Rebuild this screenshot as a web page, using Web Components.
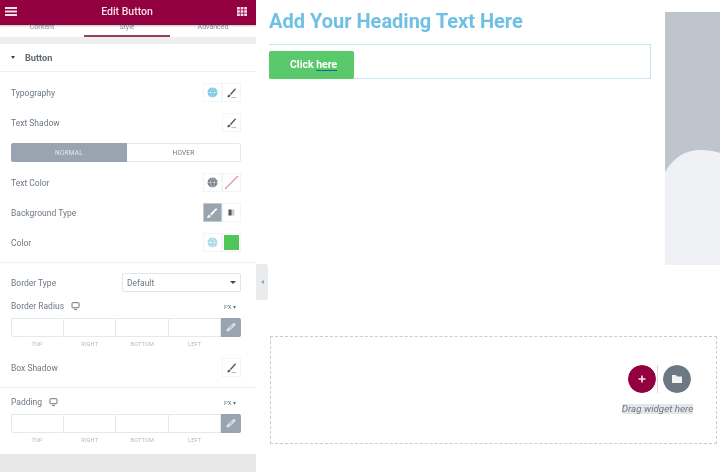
<!DOCTYPE html>
<html>
<head>
<meta charset="utf-8">
<title>Edit Button</title>
<style>
  html, body { margin: 0; padding: 0; background: #fff; overflow: hidden; }
  body { width: 720px; height: 472px; font-family: Roboto, "Liberation Sans", sans-serif; filter: blur(.6px); }
  ed-app { width: 720px; height: 472px; }
</style>
</head>
<body>
<ed-app>
  <ed-panel slot="panel">
    <ed-row label="Typography"><ed-icon-btn kind="globe" tint="#7cc4e4"></ed-icon-btn><ed-icon-btn kind="pen"></ed-icon-btn></ed-row>
    <ed-row label="Text Shadow"><ed-icon-btn kind="pen"></ed-icon-btn></ed-row>
    <ed-switch></ed-switch>
    <ed-row label="Text Color"><ed-icon-btn kind="globe" tint="#7a838b"></ed-icon-btn><ed-icon-btn kind="slash"></ed-icon-btn></ed-row>
    <ed-row label="Background Type"><ed-icon-btn kind="brush" active></ed-icon-btn><ed-icon-btn kind="gradient"></ed-icon-btn></ed-row>
    <ed-row label="Color"><ed-icon-btn kind="globe" tint="#a9d8ec"></ed-icon-btn><ed-icon-btn kind="swatch"></ed-icon-btn></ed-row>
    <ed-divider></ed-divider>
    <ed-select label="Border Type" value="Default"></ed-select>
    <ed-dimensions label="Border Radius"></ed-dimensions>
    <ed-row label="Box Shadow" class="after-dim"><ed-icon-btn kind="pen"></ed-icon-btn></ed-row>
    <ed-divider></ed-divider>
    <ed-dimensions label="Padding"></ed-dimensions>
  </ed-panel>
  <ed-canvas slot="canvas"></ed-canvas>
</ed-app>

<script>
// @ts-check
(function() {
  const ICONS = {
    pen: `<path d="M4.500 12c1.300.3 2.300-.2 2.700-1.400l-1.200-1c-1 .3-1.400 1.300-1.500 2.400z" fill="#555"/><path d="M6.700 9.300l4.300-4.800.8.7-4.200 5z" fill="#555"/><path d="M8 12.300h4" stroke="#aaa" stroke-width=".7"/>`,
    globe: `<circle cx="8" cy="8" r="4.200" fill="currentColor"/><path d="M3.800 8h8.400M8 3.800c-2.200 2.400-2.200 6 0 8.400M8 3.800c2.200 2.400 2.200 6 0 8.400" stroke="#fff" stroke-width=".5" fill="none" opacity=".7"/>`,
    brush: `<path d="M3.500 12.500c1.600.2 2.600-.4 3-1.600l-1.200-1.100c-1.200.3-1.600 1.400-1.800 2.700z" fill="#fff"/><path d="M6 9.300l5-5 1 1-4.900 5.200z" fill="#fff"/>`,
    gradient: `<rect x="5.500" y="5.500" width="5" height="5" fill="#c9ccd0"/><rect x="5.500" y="5.500" width="2.500" height="5" fill="#55595e"/>`
  };

  const iconBtn = document.createElement("template");
  iconBtn.innerHTML = `
    <style>
      :host { display: block; width: 19px; height: 19px; box-sizing: border-box; background: #fff;
              box-shadow: 0 0 0 .5px #e9ebed inset; }
      :host([active]) { background: #98a5b0; }
      svg { display: block; width: 19px; height: 19px; }
      .swatch { width: 15px; height: 15px; margin: 2px; background: #4fc65a; }
    </style>
    <div id="body"></div>`;

  class EdIconBtn extends HTMLElement {
    constructor() {
      super();
      this._root = this.attachShadow({ mode: "open" });
      this._root.appendChild(iconBtn.content.cloneNode(true));
    }
    connectedCallback() {
      const kind = this.getAttribute("kind");
      const body = this._root.querySelector("#body");
      if (kind === "swatch") {
        body.innerHTML = `<div class="swatch"></div>`;
      } else if (kind === "slash") {
        body.innerHTML = `<svg viewBox="0 0 19 19"><path d="M3 16L16 3" stroke="#e58aa0" stroke-width="1.100"/></svg>`;
      } else {
        body.style.color = this.getAttribute("tint") || "#888";
        body.innerHTML = `<svg viewBox="0 0 16 16">${ICONS[kind]}</svg>`;
      }
    }
  }
  customElements.define("ed-icon-btn", EdIconBtn);

  const row = document.createElement("template");
  row.innerHTML = `
    <style>
      :host { display: flex; align-items: center; justify-content: space-between; height: 19px;
              margin: 11px 15px 0 11px; font-size: 8.5px; color: #6d7882; }
      :host(.after-dim) { margin-top: 9px; }
      .btns { display: flex; }
    </style>
    <span id="label"></span><div class="btns"><slot></slot></div>`;

  class EdRow extends HTMLElement {
    constructor() {
      super();
      this._root = this.attachShadow({ mode: "open" });
      this._root.appendChild(row.content.cloneNode(true));
    }
    connectedCallback() {
      this._root.querySelector("#label").textContent = this.getAttribute("label");
    }
  }
  customElements.define("ed-row", EdRow);

  const sw = document.createElement("template");
  sw.innerHTML = `
    <style>
      :host { display: grid; grid-template-columns: 116px 114px; height: 19px; margin: 11px 15px 0 11px;
              font-size: 6.5px; letter-spacing: .2px; box-sizing: border-box; }
      div { display: flex; align-items: center; justify-content: center; }
      .on { background: #98a5b0; color: #e4e8ec; border-radius: 2px 0 0 2px; }
      .off { color: #6d7882; border: 1px solid #e6e8ea; border-left: 0; border-radius: 0 2px 2px 0; }
    </style>
    <div class="on">NORMAL</div><div class="off">HOVER</div>`;

  class EdSwitch extends HTMLElement {
    constructor() {
      super();
      this.attachShadow({ mode: "open" }).appendChild(sw.content.cloneNode(true));
    }
  }
  customElements.define("ed-switch", EdSwitch);

  const divider = document.createElement("template");
  divider.innerHTML = `<style>:host { display: block; height: 1px; margin-top: 10px; background: #f0f1f2; }</style>`;
  class EdDivider extends HTMLElement {
    constructor() {
      super();
      this.attachShadow({ mode: "open" }).appendChild(divider.content.cloneNode(true));
    }
  }
  customElements.define("ed-divider", EdDivider);

  const select = document.createElement("template");
  select.innerHTML = `
    <style>
      :host { display: flex; align-items: center; justify-content: space-between; height: 19px;
              margin: 10px 15px 0 11px; font-size: 8.5px; color: #6d7882; }
      .box { width: 119px; height: 19px; box-sizing: border-box; border: 1px solid #e3e5e8; border-radius: 2px;
             display: flex; align-items: center; justify-content: space-between; padding: 0 4px; }
      .caret { width: 0; height: 0; border: 3px solid transparent; border-top: 3px solid #444; border-bottom: 0; }
    </style>
    <span id="label"></span><div class="box"><span id="value"></span><i class="caret"></i></div>`;
  class EdSelect extends HTMLElement {
    constructor() {
      super();
      this._root = this.attachShadow({ mode: "open" });
      this._root.appendChild(select.content.cloneNode(true));
    }
    connectedCallback() {
      this._root.querySelector("#label").textContent = this.getAttribute("label");
      this._root.querySelector("#value").textContent = this.getAttribute("value");
    }
  }
  customElements.define("ed-select", EdSelect);

  const dims = document.createElement("template");
  dims.innerHTML = `
    <style>
      :host { display: block; margin: 8px 15px 0 11px; font-size: 8.5px; color: #6d7882; }
      .head { display: flex; align-items: center; height: 12px; }
      .head svg { width: 9px; height: 8px; margin-left: 7px; }
      .px { margin-left: auto; margin-right: 5px; font-size: 6px; }
      .inputs { display: grid; grid-template-columns: repeat(4, 52.5px) 20px; height: 19px; margin-top: 6px; }
      .inputs > div { box-sizing: border-box; border: 1px solid #e6e8ea; border-left-width: 0; }
      .inputs > div:first-child { border-left-width: 1px; border-radius: 2px 0 0 2px; }
      .inputs .link { background: #98a5b0; border: 0; border-radius: 0 2px 2px 0; }
      .link svg { display: block; width: 20px; height: 19px; }
      .caps { display: grid; grid-template-columns: repeat(4, 52.5px); height: 10px; margin-top: 2px;
              font-size: 5.5px; letter-spacing: .2px; color: #b4b9be; text-align: center; line-height: 10px; }
    </style>
    <div class="head"><span id="label"></span>
      <svg viewBox="0 0 9 8"><rect x="1" y=".7" width="7" height="5" rx=".6" fill="none" stroke="#6d7882"/><path d="M3 7.400h3" stroke="#6d7882"/></svg>
      <span class="px">PX ▾</span></div>
    <div class="inputs"><div></div><div></div><div></div><div></div>
      <div class="link"><svg viewBox="0 0 20 19"><path d="M7 12l6-5.500" stroke="#dfe4e8" stroke-width="3" stroke-linecap="round"/><path d="M8.500 10.500l3-2.700" stroke="#98a5b0"/></svg></div></div>
    <div class="caps"><span>TOP</span><span>RIGHT</span><span>BOTTOM</span><span>LEFT</span></div>`;
  class EdDimensions extends HTMLElement {
    constructor() {
      super();
      this._root = this.attachShadow({ mode: "open" });
      this._root.appendChild(dims.content.cloneNode(true));
    }
    connectedCallback() {
      this._root.querySelector("#label").textContent = this.getAttribute("label");
    }
  }
  customElements.define("ed-dimensions", EdDimensions);

  const panel = document.createElement("template");
  panel.innerHTML = `
    <style>
      :host { display: flex; flex-direction: column; width: 256px; height: 472px; background: #fff; overflow: hidden; }
      header { flex: none; height: 25px; box-sizing: border-box; background: #93003f; color: #f6dfe8; display: flex; align-items: center;
               justify-content: space-between; padding: 0 9px 2px 5px; font-size: 10.5px; font-weight: 500;
               box-shadow: 0 1px 2px rgba(0,0,0,.25); position: relative; }
      header svg { display: block; height: 9px; }
      header svg.ham { width: 12px; }
      header svg.grid { width: 10px; }
      .tabs { flex: none; display: grid; grid-template-columns: 84px 86px 86px; height: 12px; font-size: 7px;
              color: #8a9299; text-align: center; line-height: 4px; overflow: hidden; box-sizing: border-box; }
      .tabs .on { border-bottom: 2px solid #93405f; }
      .band { flex: none; height: 7px; background: #eceef0; }
      .sec { flex: none; height: 27px; border-bottom: 1px solid #f0f1f2; display: flex; align-items: center;
             padding-left: 11px; font-size: 9.2px; font-weight: 700; color: #5f6a72; }
      .sec i { width: 0; height: 0; border: 2.500px solid transparent; border-top: 3px solid #444; border-bottom: 0; margin-right: 10px; }
      .foot { flex: 1; margin-top: 9px; background: #e6e8ea; }
      main { flex: none; }
    </style>
    <header>
      <svg class="ham" viewBox="0 0 12 9"><path d="M0 1h12M0 4.500h12M0 8h12" stroke="#f6dfe8" stroke-width="1.800"/></svg>
      <span>Edit Button</span>
      <svg class="grid" viewBox="0 0 10 9"><path d="M0 0h2.800v2.400H0zM3.600 0h2.800v2.400H3.600zM7.200 0H10v2.400H7.200zM0 3.300h2.800v2.400H0zM3.600 3.300h2.800v2.400H3.600zM7.200 3.300H10v2.400H7.200zM0 6.600h2.800V9H0zM3.600 6.600h2.800V9H3.600zM7.200 6.600H10V9H7.200z" fill="#f6dfe8"/></svg>
    </header>
    <div class="tabs"><span>Content</span><span class="on">Style</span><span>Advanced</span></div>
    <div class="band"></div>
    <div class="sec"><i></i>Button</div>
    <main><slot></slot></main>
    <div class="foot"></div>`;
  class EdPanel extends HTMLElement {
    constructor() {
      super();
      this.attachShadow({ mode: "open" }).appendChild(panel.content.cloneNode(true));
    }
  }
  customElements.define("ed-panel", EdPanel);

  const canvas = document.createElement("template");
  canvas.innerHTML = `
    <style>
      :host { display: block; flex: 1; min-width: 0; padding-left: 13px; box-sizing: border-box; overflow: hidden; }
      .top { display: flex; gap: 14px; height: 265px; }
      .col { width: 382px; flex: none; }
      h1 { margin: 9px 0 0; font: 700 20px/24px Roboto, "Liberation Sans", sans-serif; color: #6ec1e4; white-space: nowrap; }
      .sect { box-sizing: border-box; height: 35px; margin-top: 11px; border: 1px solid #c5e5f1; border-left: 0;
              display: flex; align-items: flex-end; }
      .btn { box-sizing: border-box; width: 85px; height: 28px; background: #5ac96c; border-radius: 2px; color: #fff;
             font-size: 10.5px; font-weight: 700; line-height: 28px; padding-left: 21px; white-space: nowrap; margin-bottom: -1px; }
      .btn u { text-decoration: underline 1px #1f5f9c; text-underline-offset: 2px; }
      .pic { flex: none; width: 55px; height: 253px; margin-top: 12px; }
      .pic svg { display: block; width: 55px; height: 253px; }
      .zone { box-sizing: border-box; width: 447px; height: 108px; margin: 71px 0 0 1px; border: 1px dashed #c9cdd2;
              display: flex; justify-content: flex-end; padding: 28px 23px 0 0; }
      .drop { display: flex; flex-direction: column; align-items: center; width: 71px; }
      .btns { display: flex; align-items: center; height: 28px; margin-left: 4px; }
      .round { width: 28px; height: 28px; border-radius: 50%; display: block; }
      .sep { width: 1px; height: 28px; background: #e3d5da; margin: 0 5px 0 1px; }
      .hint { margin-top: 11px; font-size: 9.8px; font-style: italic; color: #6d7882; background: #e4e6e9; line-height: 10px; white-space: nowrap; }
    </style>
    <div class="top">
      <div class="col">
        <h1>Add Your Heading Text Here</h1>
        <div class="sect"><div class="btn">Click <u>here</u></div></div>
      </div>
      <div class="pic"><svg viewBox="0 0 55 253"><rect width="55" height="253" fill="#bfc5cc"/><path d="M0 160C8 146 20 138 35 138C42 138 50 139 55 141V253H0Z" fill="#f0f1f5"/></svg></div>
    </div>
    <div class="zone"><div class="drop">
      <div class="btns">
        <svg class="round" viewBox="0 0 28 28"><circle cx="14" cy="14" r="14" fill="#93003f"/><path d="M14 10.500v7M10.500 14h7" stroke="#fbe6ee" stroke-width="1.600"/></svg>
        <i class="sep"></i>
        <svg class="round" viewBox="0 0 28 28"><circle cx="14" cy="14" r="14" fill="#6d7882"/><path d="M9 10h4l1 1.500h5v6.500H9z" fill="#f2f3f4"/></svg>
      </div>
      <span class="hint">Drag widget here</span>
    </div></div>`;
  class EdCanvas extends HTMLElement {
    constructor() {
      super();
      this.attachShadow({ mode: "open" }).appendChild(canvas.content.cloneNode(true));
    }
  }
  customElements.define("ed-canvas", EdCanvas);

  const app = document.createElement("template");
  app.innerHTML = `
    <style>
      :host { display: flex; position: relative; }
      .handle { position: absolute; left: 256px; top: 264px; width: 12px; height: 36px; background: #e9ebed;
                border-radius: 0 3px 3px 0; display: flex; align-items: center; justify-content: center; }
      .handle i { width: 0; height: 0; border: 2.500px solid transparent; border-right: 3px solid #9aa1a8; border-left: 0; }
    </style>
    <slot name="panel"></slot>
    <slot name="canvas"></slot>
    <div class="handle"><i></i></div>`;
  class EdApp extends HTMLElement {
    constructor() {
      super();
      this.attachShadow({ mode: "open" }).appendChild(app.content.cloneNode(true));
    }
  }
  customElements.define("ed-app", EdApp);
})();
</script>
</body>
</html>
